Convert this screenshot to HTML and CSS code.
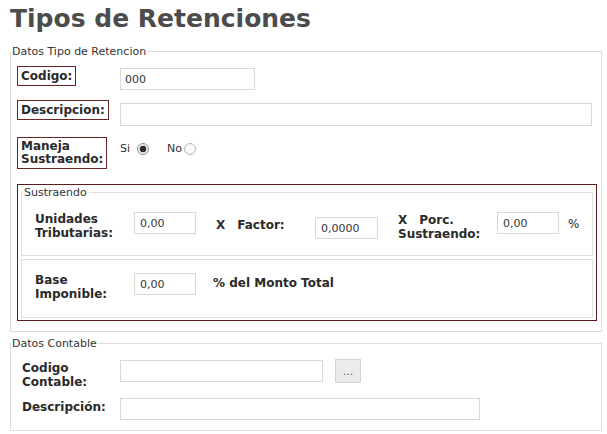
FILE: index.html
```html
<!DOCTYPE html>
<html lang="es">
<head>
<meta charset="utf-8">
<title>Tipos de Retenciones</title>
<link rel="stylesheet" href="styles.css">
</head>
<body>
<div class="page">
  <h1 class="title">Tipos de Retenciones</h1>

  <fieldset class="group main">
    <legend class="legend">Datos Tipo de Retencion</legend>
    <div class="main-body">
      <div class="row r-codigo">
        <div class="lcol"><span class="lbl boxed">Codigo:</span></div>
        <input class="inp w-codigo off2" type="text" value="000">
      </div>
      <div class="row r-desc">
        <div class="lcol"><span class="lbl boxed">Descripcion:</span></div>
        <input class="inp w-desc off3" type="text" value="">
      </div>
      <div class="row r-maneja">
        <div class="lcol"><span class="lbl boxed two">Maneja<br>Sustraendo:</span></div>
        <div class="radios">
          <span class="rtxt si">Si</span><input class="radio checked r1" type="radio" name="m" checked>
          <span class="rtxt no">No</span><input class="radio" type="radio" name="m">
        </div>
      </div>

      <div class="sus">
        <fieldset class="sub sub1">
          <legend class="legend sublegend">Sustraendo</legend>
          <div class="sus-row1">
            <span class="lbl cell-l">Unidades<br>Tributarias:</span>
            <input class="inp w-num" type="text" value="0,00">
            <span class="lbl cell-x mt6"><span class="x">X</span>Factor:</span>
            <input class="inp w-num2 mt5" type="text" value="0,0000">
            <span class="lbl cell-x2 mt1"><span class="x">X</span>Porc.<br>Sustraendo:</span>
            <input class="inp w-num" type="text" value="0,00">
            <span class="lbl pct mt5">%</span>
          </div>
        </fieldset>
        <div class="sub sus-row2">
          <span class="lbl cell-l">Base<br>Imponible:</span>
          <input class="inp w-num" type="text" value="0,00">
          <span class="lbl monto mt3">% del Monto Total</span>
        </div>
      </div>
    </div>
  </fieldset>

  <fieldset class="group contable">
    <legend class="legend">Datos Contable</legend>
    <div class="cont-body">
      <div class="row c-row1">
        <span class="lbl ccol">Codigo<br>Contable:</span>
        <input class="inp w-cc off1" type="text" value="">
        <button class="btn" type="button">...</button>
      </div>
      <div class="row c-row2">
        <span class="lbl ccol">Descripción:</span>
        <input class="inp w-cd" type="text" value="">
      </div>
    </div>
  </fieldset>
</div>
</body>
</html>
```

FILE: styles.css
```css
* { box-sizing: border-box; }

html, body {
  margin: 0;
  padding: 0;
  background: #ffffff;
}

body {
  font-family: "DejaVu Sans", Verdana, sans-serif;
  font-size: 11px;
  color: #333333;
}

.page {
  padding: 0 5px 0 10px;
}

.title {
  margin: 0;
  padding-top: 4px;
  font-size: 25px;
  line-height: 30px;
  font-weight: bold;
  color: #4c4c4c;
}

.group {
  margin: 0;
  padding: 0;
  border: 1px solid #dcdcdc;
  min-width: 0;
}

.main {
  margin-top: 11px;
}

.legend {
  padding: 0 1px;
  font-size: 11px;
  line-height: 13px;
  color: #333333;
}

.main-body {
  padding: 8px 5px 10px 6px;
}

.row {
  display: flex;
  align-items: flex-start;
}

.lcol {
  width: 103px;
  flex: none;
}

.lbl {
  font-weight: bold;
  font-size: 12px;
  line-height: 14px;
  color: #2a2a2a;
}

.boxed {
  display: inline-block;
  border: 1px solid #6a2525;
  padding: 2px 3px;
}

.boxed.two {
  line-height: 13px;
}

.r-desc { margin-top: 10px; }
.r-maneja { margin-top: 11px; }

.inp {
  display: block;
  flex: none;
  height: 22px;
  border: 1px solid #d9d9d9;
  background: #ffffff;
  padding: 0 4px;
  margin: 0;
  font-family: "DejaVu Sans", Verdana, sans-serif;
  font-size: 11px;
  color: #333333;
  outline: none;
}

.off1 { margin-top: 1px; }
.off2 { margin-top: 2px; }
.off3 { margin-top: 3px; height: 23px; }

.w-codigo { width: 135px; }
.w-desc { width: 472px; }

.radios {
  display: flex;
  align-items: center;
  margin-top: 5px;
  height: 14px;
  font-size: 11px;
}

.rtxt { line-height: 14px; color: #333; }
.si { margin-right: 7px; }
.no { margin-right: 2px; }

.radio {
  appearance: none;
  -webkit-appearance: none;
  width: 12px;
  height: 12px;
  margin: 0;
  border: 1px solid #b5b5b5;
  border-radius: 50%;
  background: #fafafa;
  flex: none;
}

.radio.checked {
  border-color: #8c8c8c;
  background: radial-gradient(circle, #2b2b2b 0, #2b2b2b 3px, #e9e9e9 3.6px, #ffffff 100%);
}

.r1 { margin-right: 18px; }

.sus {
  margin-top: 15px;
  width: 580px;
  border: 1px solid #5a1c1c;
  padding: 1px 3px 2px 3px;
}

.sub {
  margin: 0;
  padding: 0;
  border: 1px solid #dedede;
  min-width: 0;
}

.sublegend {
  padding: 0 2px;
}

.sus-row1 {
  display: flex;
  align-items: flex-start;
  height: 56px;
  padding: 13px 0 0 13px;
}

.sus-row2 {
  display: flex;
  align-items: flex-start;
  margin-top: 3px;
  height: 59px;
  padding: 13px 0 0 13px;
}

.cell-l { width: 99px; flex: none; }
.cell-x { width: 99px; flex: none; margin-left: 20px; }
.cell-x2 { width: 99px; flex: none; margin-left: 20px; }
.x { margin-right: 12px; }

.w-num { width: 62px; padding-left: 5px; }
.w-num2 { width: 63px; padding-left: 5px; }

.mt1 { margin-top: 1px; }
.mt3 { margin-top: 3px; }
.mt5 { margin-top: 5px; }
.mt6 { margin-top: 6px; }

.pct { margin-left: 9px; font-weight: normal; }
.monto { margin-left: 17px; }

.contable {
  margin-top: 5px;
}

.cont-body {
  padding: 9px 0 10px 11px;
}

.ccol {
  width: 98px;
  flex: none;
  margin-top: 2px;
}

.c-row2 { margin-top: 9px; }

.w-cc { width: 203px; }
.w-cd { width: 360px; }

.btn {
  margin: 0 0 0 12px;
  width: 26px;
  height: 24px;
  padding: 0;
  border: 1px solid #d4d4d4;
  background: #ebebeb;
  font-family: "DejaVu Sans", Verdana, sans-serif;
  font-size: 11px;
  color: #666666;
}
```
